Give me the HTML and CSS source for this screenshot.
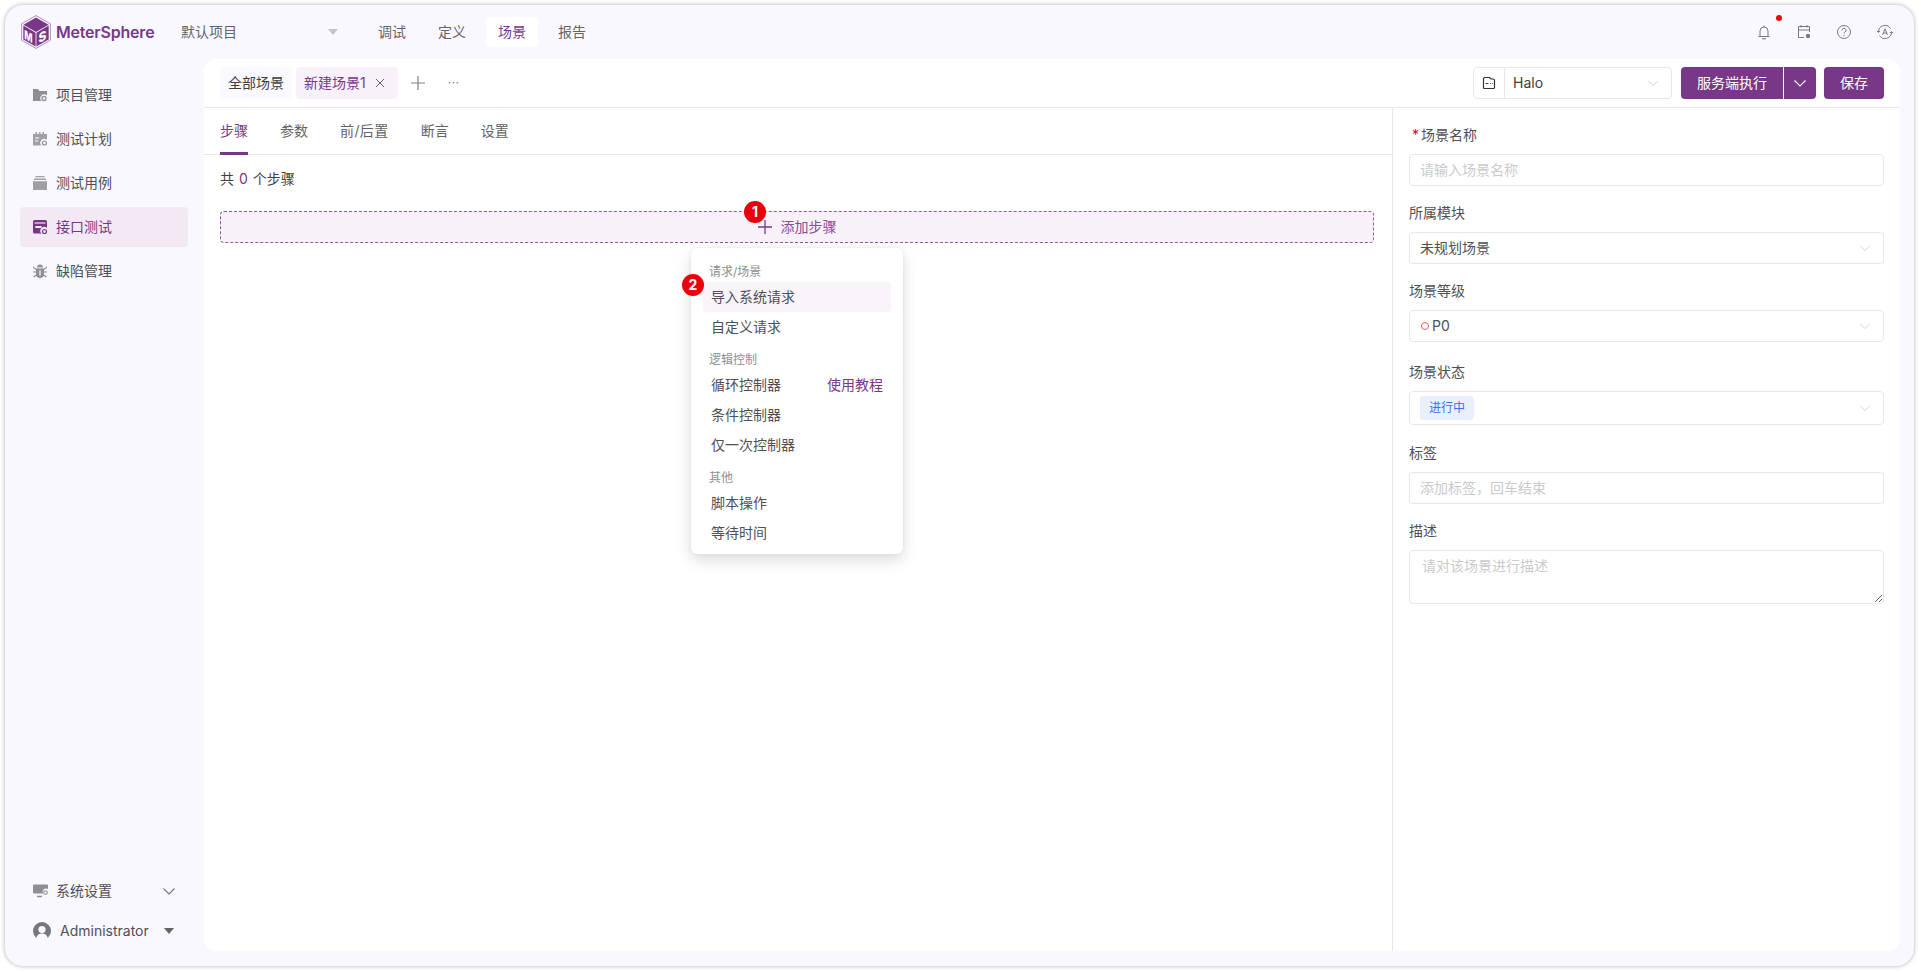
FILE: index.html
```html
<!DOCTYPE html>
<html lang="zh-CN">
<head>
<meta charset="utf-8">
<title>MeterSphere</title>
<link rel="stylesheet" href="styles.css">
</head>
<body>
<svg class="defs" width="0" height="0" aria-hidden="true">
  <symbol id="chev" viewBox="0 0 14 14"><path d="M1.500 4.500 7 10l5.500-5.500" fill="none" stroke="currentColor" stroke-width="1.100"/></symbol>
</svg>
<div class="frame">
  <header class="topbar">
    <div class="brand">
      <svg class="logo" viewBox="0 0 30 34" width="30" height="34">
        <path d="M15 .6 29.3 8.8v16.4L15 33.4.7 25.2V8.8z" fill="#fff" stroke="#9a68a6" stroke-width=".8"/>
        <path d="M15 2.500 27.600 9.800 15 17 2.400 9.800z" fill="#783887"/>
        <path d="M2.300 10.600 14.600 17.800v13.600L2.300 24.400z" fill="#783887"/>
        <path d="M27.700 10.600 15.400 17.800v13.600l12.300-7z" fill="#783887"/>
        <text class="logo-m" transform="matrix(.8 .45 0 1.100 3.300 23.500)">M</text>
        <text class="logo-s" transform="matrix(1 -.55 0 1.100 17.400 28.500)">S</text>
      </svg>
      <span class="brand-name">MeterSphere</span>
    </div>
    <div class="project"><span>默认项目</span><i class="caret caret-light"></i></div>
    <nav class="topnav">
      <a>调试</a><a>定义</a><a class="on">场景</a><a>报告</a>
    </nav>
    <div class="tools">
      <span class="tool bell">
        <svg viewBox="0 0 16 16" width="16" height="16" fill="none" stroke="currentColor"><path d="M2.500 12.500h11M4 12.500V7a4 4 0 0 1 8 0v5.500M6 14.800h4"/><path d="M8 1.500V3"/></svg>
        <i class="dot"></i>
      </span>
      <span class="tool">
        <svg viewBox="0 0 16 16" width="16" height="16" fill="none" stroke="currentColor"><path d="M8 13.500H2.500v-11h11V8M2.500 6h11M5 1v2.500M11 1v2.500"/><circle cx="12" cy="12" r="2.200" fill="currentColor" stroke="none"/></svg>
      </span>
      <span class="tool">
        <svg viewBox="0 0 16 16" width="16" height="16" fill="none" stroke="currentColor"><circle cx="8" cy="8" r="6.500"/><path d="M6 6.300a2 2 0 1 1 3 1.700c-.7.400-1 .8-1 1.500"/><path d="M8 11v1"/></svg>
      </span>
      <span class="tool">
        <svg viewBox="0 0 18 16" width="18" height="16" fill="none" stroke="currentColor"><path d="M2.500 8a6.500 6.500 0 0 1 12-3.500M15.500 8a6.500 6.500 0 0 1-12 3.500"/><path d="M1 7l1.500 1.500L4 7M14 9l1.500-1.500L17 9"/><path d="M6.500 11 9 4.800 11.500 11M7.400 9h3.200"/></svg>
      </span>
    </div>
  </header>

  <div class="body">
    <aside class="sidebar">
      <ul class="menu">
        <li class="menu-item">
          <svg viewBox="0 0 14 14" width="14" height="14"><path d="M0 1h5l1.500 2H14v4.500a3.500 3.500 0 0 0-5.500 5.500H0z" fill="#8f8f93"/><circle cx="11" cy="10.500" r="2" fill="none" stroke="#8f8f93" stroke-width="1.300"/></svg>
          <span>项目管理</span>
        </li>
        <li class="menu-item">
          <svg viewBox="0 0 14 14" width="14" height="14"><path d="M0 2h2.500V0H4v2h2V0h1.500v2h2V0H11v2h3v6a3.500 3.500 0 0 0-5.500 5.500H0z" fill="#a0a0a4"/><path d="M2 6h4M2 9h3" stroke="#fff" stroke-width="1.200"/><circle cx="11.500" cy="11" r="2" fill="none" stroke="#8f8f93" stroke-width="1.200"/></svg>
          <span>测试计划</span>
        </li>
        <li class="menu-item">
          <svg viewBox="0 0 14 14" width="14" height="14"><path d="M2.500 0h9v1.300h-9zM1 2.600h12v1.300H1zM0 5.200h14V14H0z" fill="#a0a0a4"/></svg>
          <span>测试用例</span>
        </li>
        <li class="menu-item active">
          <svg viewBox="0 0 14 14" width="14" height="14"><path d="M0 1.500A1.500 1.500 0 0 1 1.500 0h11A1.500 1.500 0 0 1 14 1.500V8a3.500 3.500 0 0 0-5.500 5.500H1.500A1.500 1.500 0 0 1 0 12z" fill="#783887"/><path d="M1.500 3h11" stroke="#fff" stroke-width="1"/><path d="M2.500 6h6v2h-6z" fill="#fff"/><circle cx="11.500" cy="11.500" r="2" fill="none" stroke="#783887" stroke-width="1.200"/></svg>
          <span>接口测试</span>
        </li>
        <li class="menu-item">
          <svg viewBox="0 0 14 14" width="14" height="14"><path d="M4 3.500a3 3 0 0 1 6 0zM3 4.500h8V10a4 4 0 0 1-8 0z" fill="#8f8f93"/><path d="M0 3l3.500 2.500M14 3l-3.500 2.500M0 8h3.500M14 8h-3.500M.500 13l3.500-2.500M13.500 13 10 10.500" stroke="#8f8f93" stroke-width="1.200"/><path d="M7 6.500v5" stroke="#f9f7ff" stroke-width="1.300"/></svg>
          <span>缺陷管理</span>
        </li>
      </ul>
      <div class="side-bottom">
        <div class="menu-item setting">
          <svg viewBox="0 0 15 14" width="15" height="14"><path d="M0 1.500A1 1 0 0 1 1 .5h13a1 1 0 0 1 1 1V5a3.500 3.500 0 0 0-5 4.500H1a1 1 0 0 1-1-1z" fill="#8f8f93"/><path d="M4 12.500h5" stroke="#8f8f93" stroke-width="1.300"/><circle cx="12.500" cy="8.500" r="1.800" fill="none" stroke="#8f8f93" stroke-width="1.100"/></svg>
          <span>系统设置</span>
          <svg class="chev-side"><use href="#chev"/></svg>
        </div>
        <div class="user">
          <svg viewBox="0 0 18 18" width="18" height="18"><circle cx="9" cy="9" r="9" fill="#77777b"/><circle cx="9" cy="7.500" r="3.600" fill="#f9f7ff"/><path d="M2.800 18c.4-4.500 3-6.500 6.200-6.500s5.800 2 6.200 6.500z" fill="#f9f7ff"/></svg>
          <span>Administrator</span>
          <i class="caret"></i>
        </div>
      </div>
    </aside>

    <main class="content">
      <div class="tabbar">
        <div class="tab">全部场景</div>
        <div class="tab tab-on"><span>新建场景1</span>
          <svg viewBox="0 0 10 10" width="10" height="10" fill="none" stroke="#646466"><path d="M1 1l8 8M9 1l-8 8"/></svg>
        </div>
        <svg class="tab-add" viewBox="0 0 14 14" width="14" height="14" fill="none" stroke="#808084" stroke-width="1.200"><path d="M7 0v14M0 7h14"/></svg>
        <span class="tab-more">···</span>
        <div class="tabbar-right">
          <div class="env">
            <span class="env-icon">
              <svg viewBox="0 0 14 14" width="14" height="14" fill="none" stroke="#323233" stroke-width="1.200"><path d="M3 1.500h4.500L9 3h2a1.500 1.500 0 0 1 1.500 1.500v7a1 1 0 0 1-1 1h-9a1 1 0 0 1-1-1V3A1.500 1.500 0 0 1 3 1.500z"/><path d="M3.500 7.500h3M8 7.500h.8M10 7.500h.8"/></svg>
            </span>
            <span class="env-val">Halo</span>
            <svg class="chev"><use href="#chev"/></svg>
          </div>
          <div class="btn-group">
            <button class="btn btn-main">服务端执行</button>
            <button class="btn btn-drop"><svg viewBox="0 0 14 14" width="14" height="14"><use href="#chev"/></svg></button>
          </div>
          <button class="btn btn-save">保存</button>
        </div>
      </div>

      <div class="split">
        <section class="left">
          <div class="subtabs">
            <a class="on">步骤</a><a>参数</a><a class="wide">前/后置</a><a>断言</a><a>设置</a>
          </div>
          <div class="panel">
            <p class="count">共 <em>0</em> 个步骤</p>
            <div class="add-step">
              <svg viewBox="0 0 14 14" width="14" height="14" fill="none" stroke="#783887" stroke-width="1.300"><path d="M7 0v14M0 7h14"/></svg>
              <span>添加步骤</span>
            </div>
            <span class="badge badge-1">1</span>
            <span class="badge badge-2">2</span>
            <div class="dropdown">
              <div class="group">请求/场景</div>
              <div class="opt hover">导入系统请求</div>
              <div class="opt">自定义请求</div>
              <div class="group g2">逻辑控制</div>
              <div class="opt"><span>循环控制器</span><a class="link">使用教程</a></div>
              <div class="opt">条件控制器</div>
              <div class="opt">仅一次控制器</div>
              <div class="group g3">其他</div>
              <div class="opt">脚本操作</div>
              <div class="opt">等待时间</div>
            </div>
          </div>
        </section>

        <section class="right">
          <div class="field">
            <label class="lbl"><i>*</i>场景名称</label>
            <div class="input ph">请输入场景名称</div>
          </div>
          <div class="field">
            <label class="lbl">所属模块</label>
            <div class="input">未规划场景<svg class="chev"><use href="#chev"/></svg></div>
          </div>
          <div class="field">
            <label class="lbl">场景等级</label>
            <div class="input lvl"><i class="ring"></i>P0<svg class="chev"><use href="#chev"/></svg></div>
          </div>
          <div class="field f-status">
            <label class="lbl">场景状态</label>
            <div class="input status"><span class="tag">进行中</span><svg class="chev"><use href="#chev"/></svg></div>
          </div>
          <div class="field f-tags">
            <label class="lbl">标签</label>
            <div class="input ph">添加标签，回车结束</div>
          </div>
          <div class="field">
            <label class="lbl">描述</label>
            <textarea class="area" placeholder="请对该场景进行描述"></textarea>
          </div>
        </section>
      </div>
    </main>
  </div>
</div>
</body>
</html>
```

FILE: styles.css
```css
* { box-sizing: border-box; }
html, body { margin: 0; height: 100%; }
body {
  background: #fff;
  font-family: Inter, "Noto Sans CJK SC", sans-serif;
  font-size: 14px;
  line-height: 22px;
  color: #3d3d40;
  padding: 5px;
  overflow: hidden;
}
.defs { position: absolute; }
.frame {
  height: 100%;
  background: #f9f7ff;
  border-radius: 18px;
  box-shadow: 0 0 4px rgba(0,0,0,.32);
  display: flex;
  flex-direction: column;
  overflow: hidden;
}
.topbar { height: 54px; flex: none; display: flex; align-items: center; padding: 0 16px; }
.brand { display: flex; align-items: center; gap: 5px; width: 160px; }
.logo { flex: none; }
.logo-m { font: 800 11px Inter, sans-serif; fill: #fff; }
.logo-s { font: 800 12px Inter, sans-serif; fill: #fff; }
.brand-name { font-size: 16px; font-weight: 600; color: #783887; letter-spacing: -.2px; }
.project { width: 157px; display: flex; justify-content: space-between; align-items: center; color: #646466; }
.caret { width: 0; height: 0; border: 5px solid transparent; border-top: 6px solid #646466; border-bottom: 0; }
.caret-light { border-top-color: #c4c4c8; }
.topnav { display: flex; gap: 8px; margin-left: 28px; }
.topnav a { padding: 4px 12px; height: 30px; border-radius: 4px; color: #646466; }
.topnav a.on { background: #fff; color: #783887; }
.tools { margin-left: auto; display: flex; gap: 24px; margin-right: 4px; color: #7a7a7e; }
.tool { position: relative; display: flex; }
.dot { position: absolute; left: 20px; top: -9px; width: 6px; height: 6px; border-radius: 50%; background: #f00; }

.body { flex: 1; display: flex; min-height: 0; padding: 0 14px 15px 0; }
.sidebar { width: 199px; flex: none; display: flex; flex-direction: column; padding: 16px 16px 0 15px; }
.menu { list-style: none; margin: 0; padding: 0; display: flex; flex-direction: column; gap: 4px; }
.menu-item { height: 40px; display: flex; align-items: center; gap: 9px; padding-left: 13px; border-radius: 4px; color: #505054; }
.menu-item.active { background: #f2e9f4; color: #783887; }
.side-bottom { margin-top: auto; padding-bottom: 1px; }
.setting { padding-left: 13px; margin-bottom: 1px; gap: 8px; }
.chev-side { width: 14px; height: 14px; margin-left: auto; margin-right: 12px; color: #77777b; }
.user { height: 38px; display: flex; align-items: center; gap: 9px; padding-left: 13px; color: #505054; }
.user .caret { margin-left: 6px; border-top-color: #646466; }

.content { flex: 1; min-width: 0; background: #fff; border-radius: 12px; display: flex; flex-direction: column; overflow: hidden; }
.tabbar { height: 49px; flex: none; display: flex; align-items: center; padding: 0 16px; border-bottom: 1px solid #e6e7ea; gap: 4px; }
.tab { height: 32px; display: flex; align-items: center; gap: 8px; padding: 0 8px; border-radius: 4px; background: #f9f9fe; margin-top: -1px; }
.tab-on { background: #f8f1f9; color: #783887; padding: 0 13px 0 8px; gap: 9px; }
.tab-add { margin-left: 9px; }
.tab-more { margin-left: 19px; color: #808084; font-size: 12px; letter-spacing: .5px; }
.tabbar-right { margin-left: auto; display: flex; align-items: center; gap: 8px; }
.env { width: 199px; height: 32px; border: 1px solid #e6e7ea; border-radius: 4px; display: flex; align-items: center; margin-right: 1px; }
.env-icon { width: 31px; height: 30px; flex: none; display: flex; align-items: center; justify-content: center; border-right: 1px solid #e6e7ea; }
.env-val { padding-left: 8px; flex: 1; }
.chev { width: 12px; height: 12px; flex: none; color: #d0d0d4; margin-left: auto; margin-right: 12px; }
.btn-group { display: flex; gap: 1px; }
.btn { height: 32px; border: 0; background: #783887; color: #fff; font: inherit; border-radius: 4px; padding: 0; display: flex; align-items: center; justify-content: center; }
.btn-main { width: 102px; border-radius: 4px 0 0 4px; }
.btn-drop { width: 32px; border-radius: 0 4px 4px 0; color: #fff; }
.btn-drop svg { width: 14px; height: 14px; }
.btn-save { width: 60px; }

.split { flex: 1; display: flex; min-height: 0; }
.left { flex: 1; min-width: 0; display: flex; flex-direction: column; border-right: 1px solid #e6e7ea; }
.subtabs { height: 47px; flex: none; display: flex; gap: 32px; padding: 0 16px; border-bottom: 1px solid #e6e7ea; }
.subtabs a { height: 47px; padding-top: 12px; color: #646466; border-bottom: 3px solid transparent; }
.subtabs a.on { color: #783887; border-bottom-color: #783887; }
.subtabs a.wide { letter-spacing: .4px; }
.panel { position: relative; flex: 1; padding: 13px 16px 0; }
.count { margin: 0; }
.count em { font-style: normal; color: #783887; padding: 0 1px; }
.add-step { margin-top: 21px; margin-right: 2px; height: 32px; background: #f8f1f9; border: 1px dashed #8f5a9b; border-radius: 4px; display: flex; align-items: center; justify-content: center; gap: 9px; color: #864c94; }
.badge { position: absolute; width: 22px; height: 22px; border-radius: 50%; background: #e8000e; color: #fff; font-size: 14px; font-weight: 700; line-height: 22px; text-align: center; z-index: 2; }
.badge-1 { left: 540px; top: 46px; }
.badge-2 { left: 478px; top: 119px; }
.dropdown { position: absolute; left: 487px; top: 93px; width: 212px; height: 306px; background: #fff; border-radius: 6px; box-shadow: 0 6px 16px rgba(0,0,0,.14), 0 0 4px rgba(0,0,0,.06); padding: 13px 12px 0; }
.group { height: 21px; padding: 2px 0 0 6px; font-size: 12px; line-height: 18px; color: #8f8f93; }
.g2 { margin-top: 8px; height: 20px; padding-top: 1px; }
.g3 { margin-top: 8px; height: 20px; padding-top: 1px; }
.opt { height: 30px; padding: 0 8px; display: flex; align-items: center; justify-content: space-between; border-radius: 4px; color: #505054; }
.hover { background: #f8f4fa; }
.link { color: #783887; }

.right { width: 507px; flex: none; padding: 16px 16px 0; display: flex; flex-direction: column; gap: 16px; }
.field { display: flex; flex-direction: column; gap: 8px; }
.f-status { margin-top: 3px; }
.f-tags { margin-top: 1px; }
.lbl { color: #505054; display: block; }
.lbl i { color: #e8000e; font-style: normal; margin: 0 2px 0 3px; }
.input { height: 32px; border: 1px solid #e6e7ea; border-radius: 4px; padding: 0 0 0 10px; display: flex; align-items: center; color: #505054; }
.ph { color: #c9cacd; }
.lvl { gap: 3px; }
.ring { width: 8px; height: 8px; margin-left: 1px; border: 1.500px solid #f25c5c; border-radius: 50%; }
.status { height: 34px; }
.tag { background: #e8f0ff; color: #3370ff; font-size: 12px; height: 24px; line-height: 24px; padding: 0 9px; border-radius: 4px; }
.area { display: block; width: 100%; height: 54px; border: 1px solid #e6e7ea; border-radius: 4px; font: inherit; padding: 4px 12px; margin: 0; outline: 0; }
.area::placeholder { color: #c9cacd; }
```
